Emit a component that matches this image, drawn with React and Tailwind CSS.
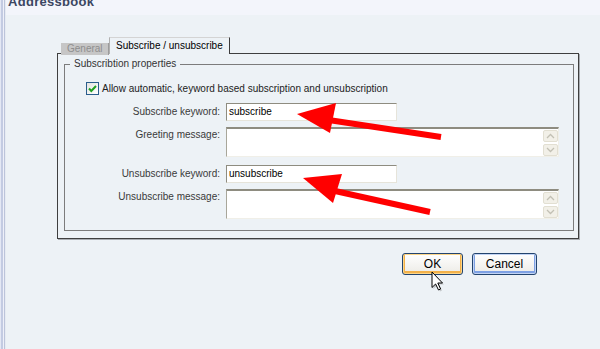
import React from "react";

function ScrollBtn({ up }) {
  return (
    <div className="w-[15px] h-[12px] rounded-[2px] border border-[#e2dfd2] bg-[#f2f0e8] flex items-center justify-center">
      <svg width="9" height="6" viewBox="0 0 9 6">
        {up ? (
          <polyline points="1,5 4.5,1.5 8,5" fill="none" stroke="#c2c0b4" strokeWidth="1.3" />
        ) : (
          <polyline points="1,1 4.5,4.5 8,1" fill="none" stroke="#c2c0b4" strokeWidth="1.3" />
        )}
      </svg>
    </div>
  );
}

function TextArea() {
  return (
    <div className="w-[333px] h-[30px] flex bg-white border-t-2 border-l border-t-[#8e8c80] border-l-[#a8a69a] border-r border-b border-r-[#f0efe8] border-b-[#f0efe8]">
      <div className="flex-1" />
      <div className="flex flex-col gap-[2px] pt-[1px]">
        <ScrollBtn up />
        <ScrollBtn />
      </div>
    </div>
  );
}

function Input({ value }) {
  return (
    <div className="w-[171px] h-[18px] bg-white border-t border-l border-t-[#8e8c80] border-l-[#8e8c80] border-r border-b border-r-[#e6e4da] border-b-[#e6e4da] pl-[2px] flex items-center text-black text-[10px] leading-none">
      {value}
    </div>
  );
}

export default function App() {
  return (
    <div className="w-[600px] h-[349px] bg-[#edf2f6] relative overflow-hidden flex font-['Liberation_Sans',Arial,sans-serif] text-[10px] text-[#3a3a3a]">
      {/* left window frame */}
      <div className="flex shrink-0 h-full">
        <div className="w-[1px] bg-[#e4e8f4]" />
        <div className="w-[2px] bg-[#c3cbe2]" />
        <div className="w-[1px] bg-[#eef0f9]" />
        <div className="w-[1px] bg-[#bcc4da]" />
        <div className="w-[1px] bg-[#e6ebf2]" />
      </div>

      <div className="flex-1 flex flex-col">
        {/* title bar */}
        <div className="h-[15px] bg-[#f3f5fb] overflow-hidden pl-[2px] shrink-0">
          <div className="text-[13px] font-bold text-[#3b4662] leading-[13px] -mt-[5px] tracking-[0.3px]">
            Addressbook
          </div>
        </div>

        {/* tab area */}
        <div className="pl-[51px] pt-[22px]">
          <div className="flex items-end h-[16px] pl-[4px]">
            <div className="relative z-10 h-[12px] -mb-[2px] w-[48px] bg-[#c6c6c6] border-r border-r-[#9c9c9c] text-[#8e8e8e] flex items-center pl-[6px] leading-none">
              General
            </div>
            <div className="relative z-10 h-[17px] -mb-[1px] w-[121px] bg-[#edf2f6] border-t border-t-[#d4d4d4] border-l border-l-[#b0b0b0] border-r border-r-[#3c3c3c] text-black flex items-center pl-[6px] pb-[1px] leading-none">
              Subscribe / unsubscribe
            </div>
          </div>

          {/* panel */}
          <div className="w-[522px] h-[186px] border border-[#3f3f3f] shadow-[1px_1px_0_#a9adb2] pl-[6px] pr-[4px] pt-[4px]">
            <fieldset className="h-[173px] border border-[#7c7c7c]">
              <legend className="ml-[5px] px-[4px] leading-[12px] text-[#333]">Subscribtion properties</legend>

              <div className="flex items-center pl-[21px] pt-[12px] text-[#222] leading-[13px]">
                <div className="w-[13px] h-[13px] border border-[#2a5d8c] bg-gradient-to-br from-[#e4e4e0] to-white flex items-center justify-center">
                  <svg width="11" height="11" viewBox="0 0 11 11">
                    <polyline points="2,5.5 4.3,8 9,3" fill="none" stroke="#21a121" strokeWidth="2" />
                  </svg>
                </div>
                <span className="ml-[3px]">Allow automatic, keyword based subscription and unsubscription</span>
              </div>

              <div className="grid grid-cols-[155px_auto] gap-x-[6px] mt-[8px] items-start leading-[12px]">
                <div className="h-[18px] flex items-center justify-end">Subscribe keyword:</div>
                <Input value="subscribe" />

                <div className="mt-[6px] pt-[2px] text-right">Greeting message:</div>
                <div className="mt-[6px]"><TextArea /></div>

                <div className="mt-[8px] h-[18px] flex items-center justify-end">Unsubscribe keyword:</div>
                <div className="mt-[8px]"><Input value="unsubscribe" /></div>

                <div className="mt-[6px] pt-[2px] text-right">Unsubscribe message:</div>
                <div className="mt-[6px]"><TextArea /></div>
              </div>
            </fieldset>
          </div>
        </div>

        {/* buttons */}
        <div className="flex justify-end gap-[9px] pr-[63px] mt-[14px] text-[12px] text-black">
          <button className="w-[61px] h-[22px] rounded-[3px] border border-[#23446e] bg-gradient-to-b from-white to-[#ecebe6] shadow-[inset_0_0_0_1px_#fcd68a,inset_0_-1px_0_2px_#f3b14a] leading-none">
            OK
          </button>
          <button className="w-[65px] h-[22px] rounded-[3px] border border-[#23446e] bg-gradient-to-b from-white to-[#ecebe6] shadow-[inset_0_0_0_1px_#c2d4f4,inset_0_-1px_0_2px_#7ea1e4] leading-none">
            Cancel
          </button>
        </div>
      </div>

      {/* red arrows overlay */}
      <svg className="absolute left-0 top-0 pointer-events-none" width="600" height="349" viewBox="0 0 600 349">
        <line x1="322" y1="119" x2="441" y2="137" stroke="#ff0000" strokeWidth="6" />
        <polygon points="297,114 336,103 330,133" fill="#ff0000" />
        <line x1="326" y1="189" x2="430" y2="212" stroke="#ff0000" strokeWidth="6" />
        <polygon points="303,178 342,174 333,203" fill="#ff0000" />
      </svg>

      {/* mouse cursor */}
      <svg className="absolute left-[431px] top-[271px] pointer-events-none" width="14" height="21" viewBox="0 0 14 21">
        <polygon points="1.5,1.5 1.5,17 5,13.5 8,19.5 10,18.5 7.2,12.5 12,12.5" fill="#7a7a7a" opacity="0.35" transform="translate(1,1)" />
        <polygon points="1,1 1,16.5 4.6,13 7.5,19 9.6,18 6.8,12 11.5,12" fill="white" stroke="black" strokeWidth="1" strokeLinejoin="round" />
      </svg>
    </div>
  );
}
